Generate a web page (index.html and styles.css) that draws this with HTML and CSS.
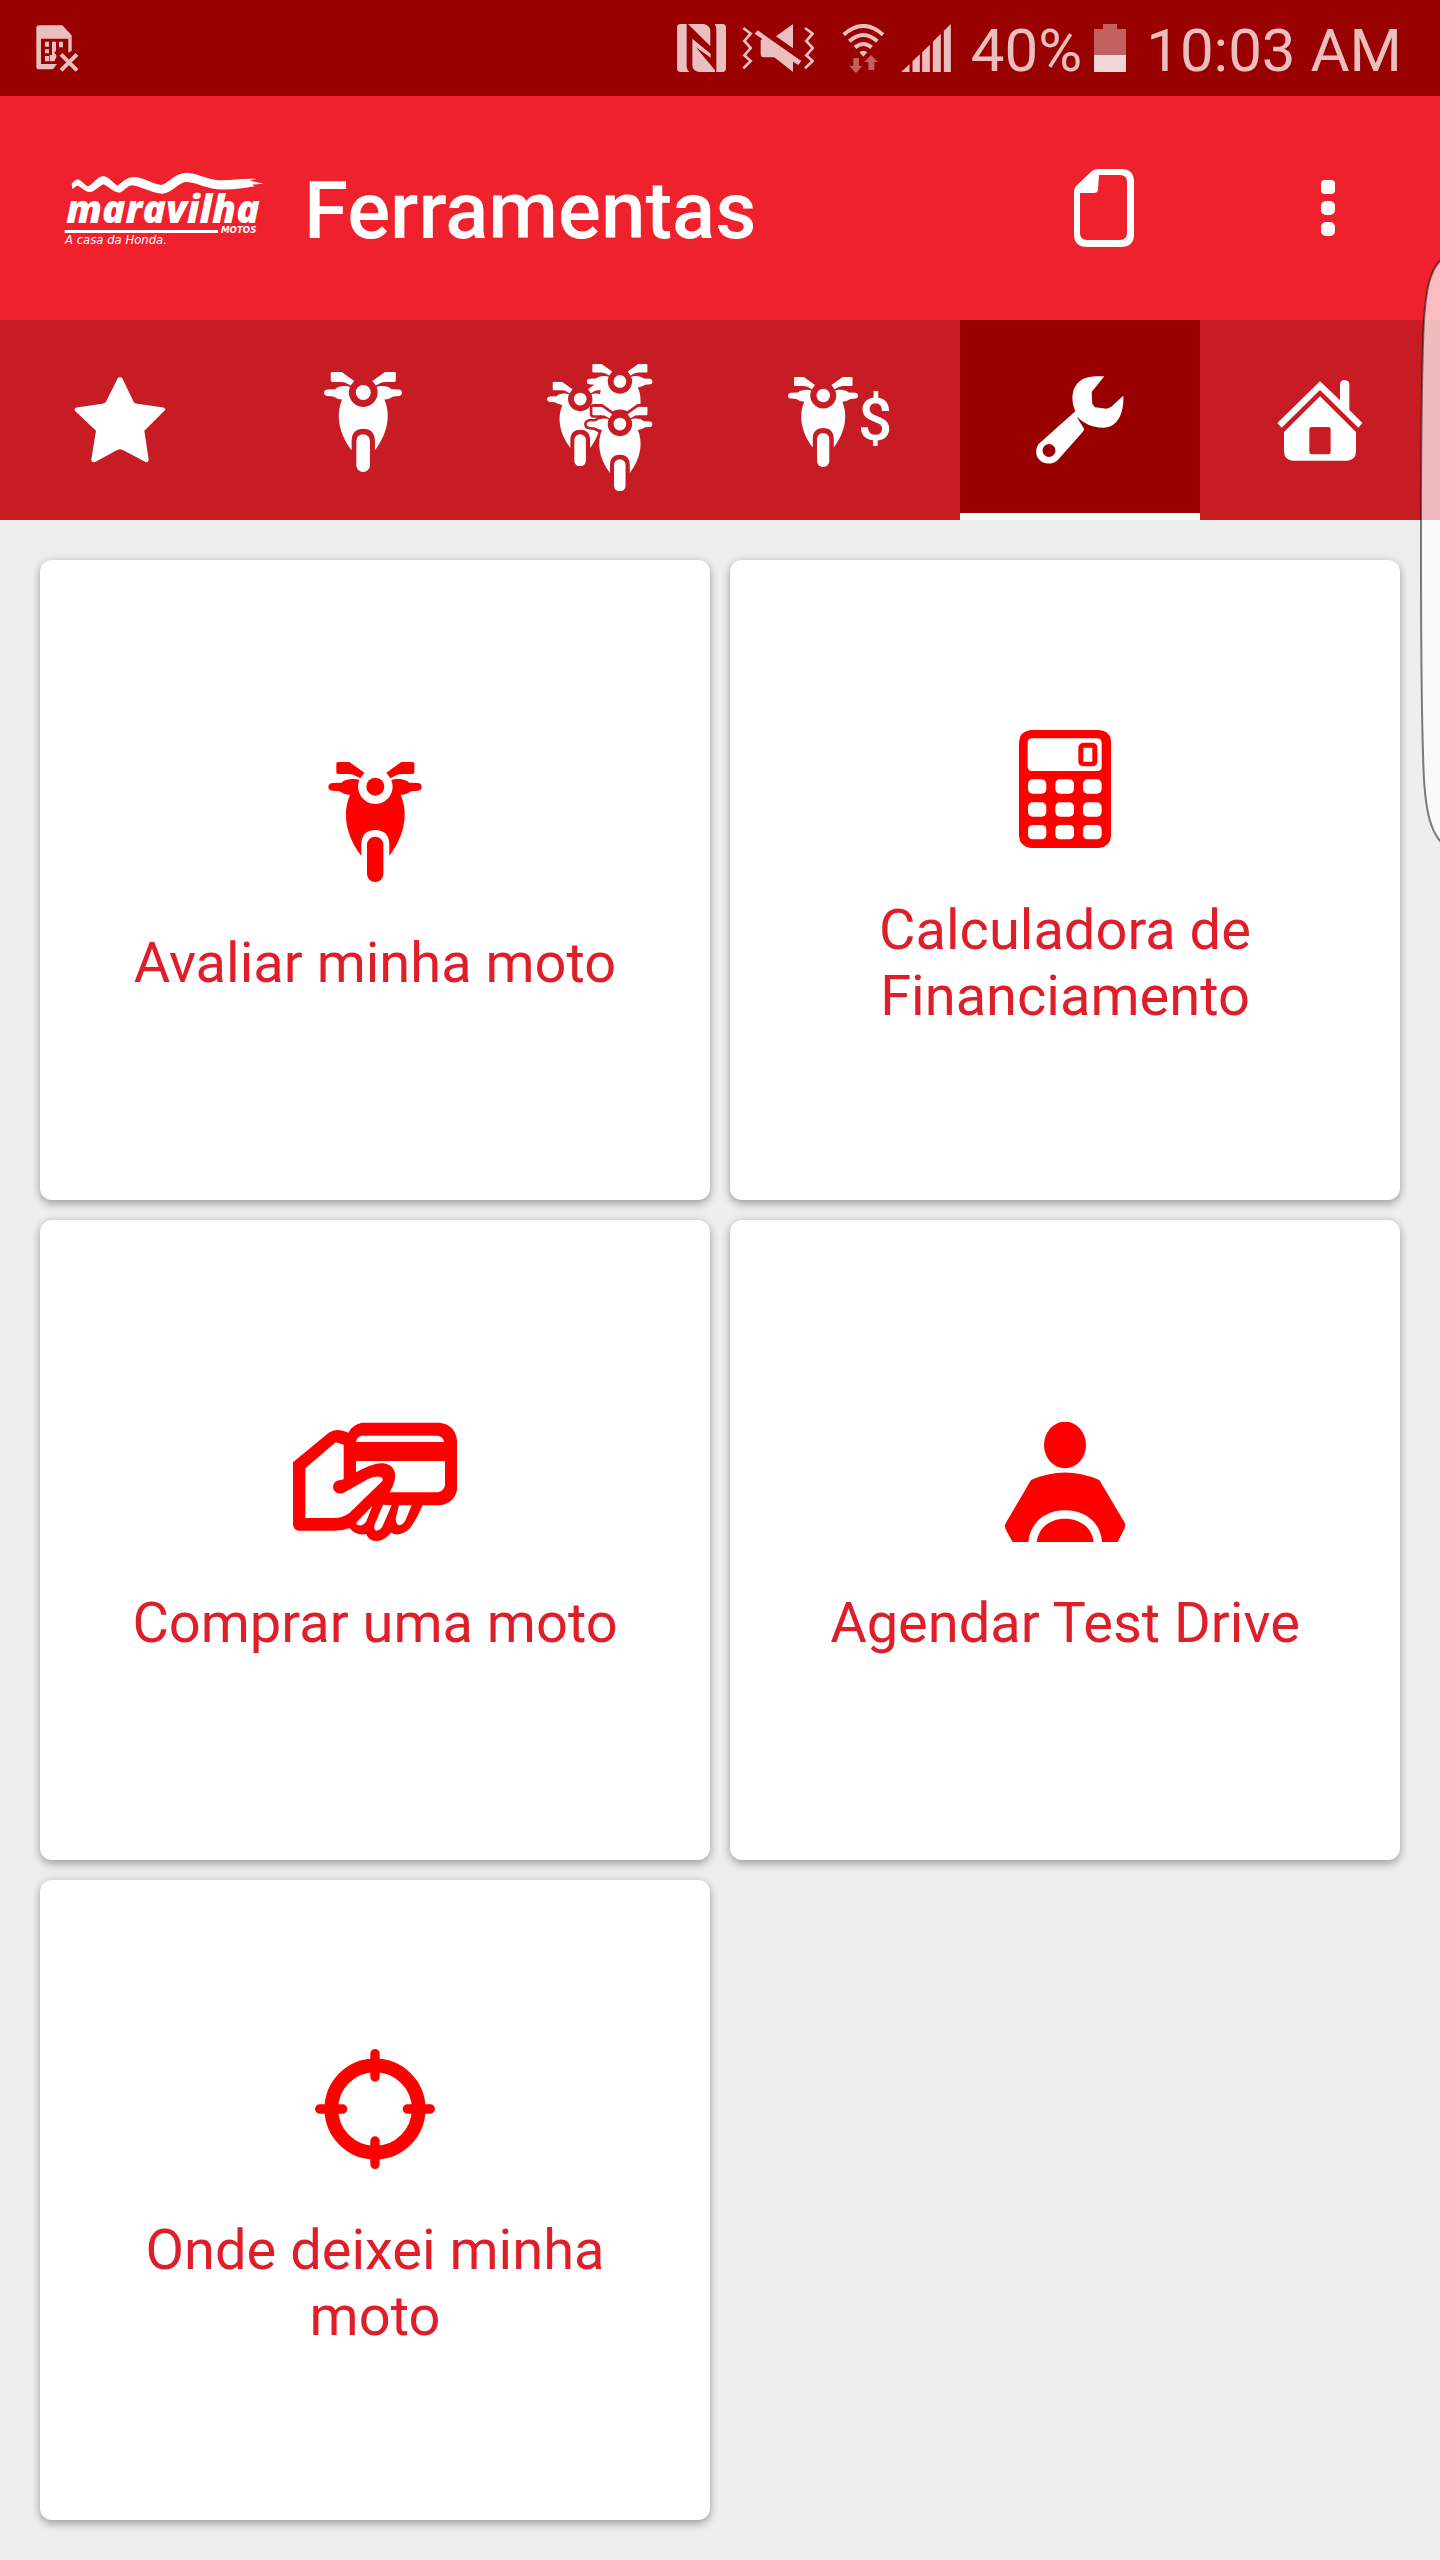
FILE: index.html
```html
<!DOCTYPE html>
<html lang="pt-BR">
<head>
<meta charset="utf-8">
<meta name="viewport" content="width=device-width, initial-scale=1">
<title>Ferramentas</title>
<link rel="stylesheet" href="styles.css">
</head>
<body>
<svg class="sprite" aria-hidden="true">
  <symbol id="moto" viewBox="143 96 280 360">
    <g id="moto-shape">
      <path d="M172 96H206L251 128L239 145L218 134Q212 132 204 132H172Q167 132 167 127V101Q167 96 172 96Z"/>
      <path d="M396 96H362L317 128L329 145L350 134Q356 132 364 132H396Q401 132 401 127V101Q401 96 396 96Z"/>
      <path d="M236 150C222 144 192 146 183 158L155 159Q143 161 143 171Q143 181 155 182L176 184Q190 194 208 195C186 245 192 312 242 378V344C242 314 258 300 284 300C310 300 326 314 326 344V378C376 312 382 245 360 195Q378 194 392 184L413 182Q423 181 423 171Q423 161 413 159L385 158C376 146 346 144 332 150A52 52 0 1 1 236 150Z"/>
      <circle cx="284" cy="170" r="27"/>
      <rect x="259" y="320" width="49" height="136" rx="24"/>
    </g>
  </symbol>
</svg>

<div class="status-bar">
  <svg class="status-icon" width="43" height="47" viewBox="107 75 129 141" aria-label="Sem SIM">
    <path fill-rule="evenodd" d="M116 76H186L214 106V152L204 158V116H122V192H170L158 208H116Q108 208 108 200V84Q108 76 116 76Z"/>
    <path d="M134 125H146V140H134ZM155 125H167V152L162 158L168 165V172L162 184H148V165H155ZM176 125H188V142H176ZM134 148H146V160H134ZM134 168H146V184H134Z"/>
    <path class="line" stroke-width="12" d="M182 163L230 211M230 163L182 211"/>
  </svg>
  <div class="status-group">
    <svg class="status-icon" width="49" height="48" viewBox="51 75 147 144" aria-label="NFC">
      <path d="M62 75H80V205Q82 214 88 219H62Q51 219 51 208V86Q51 75 62 75ZM84 75H130Q151 78 151 98V142ZM164 75H187Q198 75 198 86V208Q198 219 187 219H169V90Q168 80 164 75Z"/>
      <path d="M97 119L152 164V176L108 145L165 214V219H118Q97 216 97 198Z"/>
    </svg>
    <svg class="status-icon" width="72" height="48" viewBox="243 75 216 144" aria-label="Vibrar">
      <path d="M396 75V148L345 112ZM290 94L421 186L412 198L396 188V219L340 175H308Q299 175 299 166V124L304 120L281 104Z"/>
      <path class="line" stroke-width="8" d="M247 87L269 104L250 126L269 147L250 169L269 186L247 208M432 87L455 104L436 126L455 147L436 169L455 186L432 208"/>
    </svg>
    <svg class="status-icon wifi" width="43" height="49" viewBox="543 72 129 147" aria-label="Wi-Fi">
      <path class="line" stroke-width="12" d="M548 104Q607 52 666 104M565 124Q607 86 649 124M582 142Q607 122 632 142"/>
      <path d="M595 157Q607 148 619 157L607 170Z"/>
      <path opacity=".5" d="M577 174H594V198H604L585 219L565 198H577ZM622 210H640V186H651L630 165L610 186H622Z"/>
    </svg>
    <svg class="status-icon" width="50" height="48" viewBox="718 75 149 144" aria-label="Sinal">
      <path d="M718 219L743 196V219ZM752 219V187L774 166V219ZM781 219V160L804 137V219ZM813 219V128L837 104V219ZM846 219V96L867 75V219Z"/>
    </svg>
    <span class="status-text">40%</span>
    <svg class="status-icon battery" width="32" height="48" viewBox="0 0 32 48" aria-label="Bateria">
      <path opacity=".5" d="M9 0H23V5H32V31H0V5H9Z"/>
      <path class="charge" d="M0 31H32V48H0Z"/>
    </svg>
    <span class="status-text">10:03 AM</span>
  </div>
</div>

<header class="app-bar">
  <svg class="logo" width="200" height="80" viewBox="193 509 600 240" role="img" aria-label="Maravilha Motos, a casa da Honda">
    <path d="M216 550C222 540 232 535 238 538C248 542 256 556 266 558C280 552 290 530 310 527C330 530 340 548 354 556C368 546 378 532 400 530C432 530 450 548 484 554C508 548 522 520 560 517C590 518 616 534 650 539C690 543 725 532 770 536L750 541L792 550L758 553L765 558C720 566 670 572 632 563C600 556 584 544 556 545C532 550 518 578 488 580C452 578 430 560 398 555C380 556 372 576 358 577C338 574 326 558 312 552C298 556 286 576 268 575C252 572 244 558 234 556C226 557 224 564 218 566Z"/>
    <text class="logo-name" x="200" y="669">maravilha</text>
    <rect x="195" y="689" width="460" height="9"/>
    <text class="logo-sub" x="664" y="698">MOTOS</text>
    <text class="logo-tag" x="196" y="732">A casa da Honda.</text>
  </svg>
  <h1 class="title">Ferramentas</h1>
  <button class="bar-button" type="button" aria-label="Documento">
    <svg width="60" height="78" viewBox="0 0 60 78">
      <path fill-rule="evenodd" d="M24 0H47Q60 0 60 13V65Q60 78 47 78H13Q0 78 0 65V22Q0 19 2 17L18 2Q21 0 24 0ZM25 6L24 20Q24 24 20 24H6V64Q6 71 13 71H46Q53 71 53 64V13Q53 6 46 6Z"/>
    </svg>
  </button>
  <button class="bar-button" type="button" aria-label="Mais opções">
    <svg width="14" height="56" viewBox="0 0 14 56">
      <rect width="14" height="14" rx="4"/><rect y="21" width="14" height="14" rx="5"/><rect y="42" width="14" height="14" rx="5"/>
    </svg>
  </button>
</header>

<nav class="tabs">
  <a class="tab" href="#favoritos" aria-label="Favoritos">
    <svg width="92" height="86" viewBox="222 170 276 257"><path d="M354 172Q360 168 366 172L402 246Q404 249 412 250L490 261Q498 263 496 268L433 331L446 418Q446 426 438 425L367 388Q360 385 353 388L284 425Q273 425 274 416L288 331L224 270Q222 263 230 261L308 250Q314 249 318 244Z"/></svg>
  </a>
  <a class="tab" href="#moto" aria-label="Moto">
    <svg width="84" height="104"><use href="#moto" x="6" y="4" width="78" height="100"/></svg>
  </a>
  <a class="tab" href="#motos" aria-label="Motos">
    <svg width="106" height="144" viewBox="0 -48 318 432">
      <use href="#moto" x="119" y="0" width="198" height="254"/>
      <circle class="tab-gap" cx="98" cy="105" r="36"/>
      <use href="#moto" x="0" y="53" width="198" height="254"/>
      <g class="halo" transform="translate(18 60) scale(.707)"><use href="#moto-shape"/><circle cx="284" cy="170" r="51"/></g>
      <use href="#moto" x="119" y="128" width="198" height="254"/>
    </svg>
  </a>
  <a class="tab" href="#precos" aria-label="Preços">
    <svg width="70" height="94"><use href="#moto" x="0" y="4" width="70" height="90"/></svg>
    <span class="dollar">$</span>
  </a>
  <a class="tab tab-active" href="#ferramentas" aria-label="Ferramentas" aria-current="page">
    <svg width="88" height="88" viewBox="284 166 264 264"><path fill-rule="evenodd" d="M489 167L451 214L453 250L461 260L496 264L509 259L546 225C548 270 534 320 485 321C452 320 428 308 406 288L429 326L424 334L350 417C334 434 305 432 292 415C282 402 282 384 292 370L402 272C386 236 390 190 430 173C448 166 468 166 489 167ZM323 370A19 19 0 1 0 323 409A19 19 0 1 0 323 370Z"/></svg>
  </a>
  <a class="tab" href="#inicio" aria-label="Início">
    <svg width="86" height="81" viewBox="1009 178 256 243">
      <path d="M1137 182L1197 239V192Q1198 178 1211 178Q1225 179 1225 192V268L1264 307L1252 321L1137 208L1022 321L1009 307Z"/>
      <path fill-rule="evenodd" d="M1137 227L1245 334V394Q1243 418 1219 420H1055Q1031 418 1029 394V334ZM1112 319Q1105 319 1105 326V394Q1105 401 1112 401H1162Q1169 401 1169 394V326Q1169 319 1162 319Z"/>
    </svg>
  </a>
</nav>

<main class="cards">
  <a class="card" href="#avaliar">
    <svg class="card-icon" width="94" height="120"><use href="#moto"/></svg>
    <span class="card-label">Avaliar minha moto</span>
  </a>
  <a class="card" href="#calculadora">
    <svg class="card-icon" width="92" height="120" viewBox="116 87 276 360">
      <path fill-rule="evenodd" d="M152 90H356Q392 94 392 126V408Q390 440 356 444H152Q118 440 116 408V126Q118 94 152 90ZM154 115Q142 116 142 128V201Q143 213 154 213H353Q364 212 364 201V128Q363 116 353 115Z"/>
      <g class="cutout">
        <rect x="143" y="238" width="55" height="43" rx="14"/><rect x="225" y="238" width="56" height="43" rx="14"/><rect x="308" y="238" width="56" height="43" rx="14"/>
        <rect x="143" y="307" width="55" height="43" rx="14"/><rect x="225" y="307" width="56" height="43" rx="14"/><rect x="308" y="307" width="56" height="43" rx="14"/>
        <rect x="143" y="375" width="55" height="43" rx="14"/><rect x="225" y="375" width="56" height="43" rx="14"/><rect x="308" y="375" width="56" height="43" rx="14"/>
      </g>
      <path fill-rule="evenodd" d="M308 128H338Q351 130 351 142V185Q350 198 338 199H308Q295 197 294 185V142Q296 130 308 128ZM309 143V185H336V143Z"/>
    </svg>
    <span class="card-label">Calculadora de Financiamento</span>
  </a>
  <a class="card" href="#comprar">
    <svg class="card-icon" width="164" height="120" viewBox="66 94 492 360">
      <path fill-rule="evenodd" d="M272 96H506Q552 102 558 148V298Q550 338 506 344H455Q436 388 414 416Q386 440 360 426Q338 452 315 451Q292 450 286 430Q254 436 236 412Q215 420 190 420H84Q68 418 66 402V215L166 132Q194 108 232 126Q244 102 272 96ZM103 233V382H188Q215 382 236 366L334 271Q338 258 324 258Q308 256 290 266L218 306Q200 314 188 298Q182 278 198 270L218 266V162L194 155ZM255 154H520Q516 136 498 135H272Q258 138 255 154ZM255 211V245C290 226 330 208 356 224C380 240 376 270 356 305H500Q518 302 522 284V211ZM304 346L260 392Q250 402 264 404Q278 406 286 392ZM336 342L310 404Q308 420 318 420Q328 418 334 408L362 344ZM384 344L374 384Q374 402 386 404Q398 400 402 392L422 344Z"/>
    </svg>
    <span class="card-label">Comprar uma moto</span>
  </a>
  <a class="card" href="#test-drive">
    <svg class="card-icon" width="120" height="120" viewBox="75 96 360 360">
      <ellipse cx="255" cy="165" rx="63" ry="70"/>
      <path d="M153 270Q255 225 358 270L435 400Q437 410 430 422L413 456H366C362 396 314 361 255 361C196 361 150 398 145 456H98L79 422Q72 410 77 400ZM170 456C176 412 210 386 255 386C300 386 336 412 341 456Z"/>
    </svg>
    <span class="card-label">Agendar Test Drive</span>
  </a>
  <a class="card" href="#onde-deixei">
    <svg class="card-icon" width="120" height="120" viewBox="75 87 360 360">
      <circle class="ring" cx="255" cy="267" r="131" stroke-width="41"/>
      <path class="ring" stroke-width="28" stroke-linecap="round" d="M255 101V171M255 363V433M89 267H158M352 267H421"/>
    </svg>
    <span class="card-label">Onde deixei minha moto</span>
  </a>
</main>

<svg class="edge-handle" width="20" height="592" viewBox="0 0 20 592" aria-hidden="true">
  <path d="M21 4C10 14 6 34 4 64C1 120 1 200 1 296C1 380 1 460 4 524C6 554 10 574 21 586"/>
</svg>
</body>
</html>
```

FILE: styles.css
```css
* {
  box-sizing: border-box;
}

body {
  position: relative;
  display: flex;
  flex-direction: column;
  min-height: 100vh;
  margin: 0;
  overflow-x: hidden;
  background: #eee;
  font-family: Roboto, "Liberation Sans", sans-serif;
}

svg {
  display: block;
  flex: none;
  fill: currentColor;
}

.sprite {
  position: absolute;
  width: 0;
  height: 0;
}

/* System status bar */
.status-bar {
  display: flex;
  align-items: center;
  justify-content: space-between;
  height: 96px;
  padding: 0 38px 0 36px;
  background: #900;
  color: #ebbfbf;
}

.status-group {
  display: flex;
  align-items: center;
  gap: 16px;
}

.wifi {
  margin-left: 12px;
}

.battery {
  margin-left: -4px;
}

.charge {
  fill: #f0d6d6;
}

.line {
  fill: none;
  stroke: currentColor;
}

.status-text {
  padding: 6px 0 0 4px;
  font-size: 60px;
  line-height: 70px;
}

/* App bar */
.app-bar {
  display: flex;
  align-items: center;
  height: 224px;
  padding: 0 72px 0 64px;
  background: #ee212c;
  color: #fff;
}

.logo {
  margin-top: 4px;
}

.logo-name {
  font: italic 800 116px "Open Sans", sans-serif;
}

.logo-sub {
  font: italic 700 26px "DejaVu Sans", sans-serif;
}

.logo-tag {
  font: italic 400 35px "DejaVu Sans", sans-serif;
}

.title {
  flex: 1;
  margin: 0 0 0 40px;
  padding-top: 6px;
  font-size: 80px;
  font-weight: 500;
  line-height: 94px;
}

.bar-button {
  display: flex;
  align-items: center;
  justify-content: center;
  width: 128px;
  height: 128px;
  padding: 0;
  border: 0;
  background: none;
  color: inherit;
}

.bar-button + .bar-button {
  margin-left: 96px;
  margin-right: -24px;
}

/* Tabs */
.tabs {
  display: grid;
  grid-template-columns: repeat(6, 1fr);
  height: 200px;
  background: #c81c24;
}

.tab {
  display: flex;
  align-items: center;
  justify-content: center;
  padding-top: 7px;
  border-bottom: 7px solid transparent;
  color: #fff;
  text-decoration: none;
}

.tab-active {
  background: #900;
  border-bottom-color: #fff;
}

.tab-gap {
  fill: #c81c24;
}

.halo {
  fill: #c81c24;
  stroke: #c81c24;
  stroke-width: 22px;
}

.dollar {
  font-size: 60px;
  font-weight: 500;
  line-height: 72px;
}

/* Tool cards */
.cards {
  display: grid;
  grid-template-columns: repeat(2, 1fr);
  grid-auto-rows: 640px;
  gap: 20px;
  padding: 40px;
}

.card {
  display: flex;
  flex-direction: column;
  align-items: center;
  justify-content: center;
  gap: 48px;
  padding: 0 60px;
  border-radius: 12px;
  background: #fff;
  box-shadow: 0 4px 8px rgba(0, 0, 0, .28), 0 0 10px rgba(0, 0, 0, .1);
  color: #de1f2a;
  text-decoration: none;
}

.card-icon {
  color: #f00;
}

.cutout {
  fill: #fff;
}

.ring {
  fill: none;
  stroke: currentColor;
}

.card-label {
  padding-bottom: 2px;
  font-size: 56px;
  line-height: 66px;
  text-align: center;
}

/* Edge panel handle floating over the screen */
.edge-handle {
  position: absolute;
  top: 256px;
  right: 0;
  fill: rgba(255, 255, 255, .7);
  stroke: rgba(0, 0, 0, .5);
  stroke-width: 2px;
}
```
